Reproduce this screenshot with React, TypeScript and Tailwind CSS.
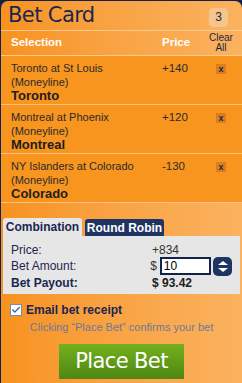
import { Check } from 'lucide-react'

interface Bet {
  event: string
  market: string
  pick: string
  price: string
}

const bets: Bet[] = [
  { event: 'Toronto at St Louis', market: '(Moneyline)', pick: 'Toronto', price: '+140' },
  { event: 'Montreal at Phoenix', market: '(Moneyline)', pick: 'Montreal', price: '+120' },
  { event: 'NY Islanders at Colorado', market: '(Moneyline)', pick: 'Colorado', price: '-130' },
]

export default function App() {
  return (
    <div className="w-[242px] h-[383px] bg-[#13224d] pl-px pt-px overflow-hidden font-['Liberation_Sans',Arial,sans-serif]">
      <div className="h-[382px] w-[241px] rounded-t-[7px] bg-gradient-to-r from-[#f7921e] via-[#f9a445] to-[#fbb25e] flex flex-col">
        {/* header */}
        <div className="flex items-center justify-between h-[30px] pl-[7px] pr-[13px] border-b border-[#fcc88e]">
          <span className="text-[21px] leading-none text-[#1b2650] font-['DejaVu_Sans',sans-serif] tracking-[-0.6px]">Bet Card</span>
          <span className="w-[21px] h-[21px] rounded-[5px] bg-[#f6c58a] border border-[#f3b06a] flex items-center justify-center text-[12px] text-[#1b2650] mt-[3px]">3</span>
        </div>
        <div className="flex items-center h-[25px] border-b border-[#fcc88e] pl-[10px] pr-[8px] text-[11.5px] font-bold text-white">
          <span className="flex-1">Selection</span>
          <span className="w-[46px]">Price</span>
          <span className="w-[26px] text-center text-[10px] leading-[10px] font-normal text-[#1b2650]">Clear<br />All</span>
        </div>
        {/* selections */}
        <div className="bg-[#f8951f]">
          {bets.map((b) => (
            <div key={b.event} className="flex h-[49px] border-b border-[#fbc083] pl-[10px] pr-[8px] pt-[6px] text-[11px] leading-[13.5px] text-[#2a2a2a]">
              <div className="flex-1">
                <div>{b.event}</div>
                <div>{b.market}</div>
                <div className="text-[13px] font-bold text-[#1d1d1d]">{b.pick}</div>
              </div>
              <div className="w-[46px] text-[11.5px]">{b.price}</div>
              <div className="w-[26px] flex justify-center pt-[2px]">
                <span className="w-[10px] h-[10px] bg-[#d77f1f] text-[9px] leading-[10px] text-center font-bold text-[#1b2650]">x</span>
              </div>
            </div>
          ))}
        </div>
        {/* tabs */}
        <div className="flex items-end gap-[3px] pl-[2px] mt-[15px] h-[18px]">
          <div className="h-[18px] w-[79px] bg-[#e6e6e6] rounded-t-[3px] flex items-center justify-center text-[12px] font-bold text-[#1b2650]">Combination</div>
          <div className="h-[17px] w-[79px] bg-[#1f3462] rounded-t-[3px] flex items-center justify-center text-[12px] font-bold text-white">Round Robin</div>
        </div>
        <div className="mx-[2px] bg-[#e6e6e6] px-[8px] pt-[6px] pb-[3px] text-[12px] text-[#1b2650]">
          <div className="flex h-[15px] items-center">
            <span className="w-[141px]">Price:</span>
            <span className="text-[#333]">+834</span>
          </div>
          <div className="flex h-[18px] items-center">
            <span className="w-[141px]">Bet Amount:</span>
            <span className="text-[#333] mr-[3px]">$</span>
            <div className="w-[52px] h-[18px] border-2 border-[#13224d] bg-white text-[12px] leading-[14px] px-[2px] text-black">10</div>
            <div className="ml-[2px] w-[19px] h-[19px] rounded-[5px] bg-[#1f3462] flex flex-col items-center justify-center gap-[3px]">
              <span className="w-0 h-0 border-x-[5px] border-x-transparent border-b-[4px] border-b-white" />
              <span className="w-0 h-0 border-x-[5px] border-x-transparent border-t-[4px] border-t-white" />
            </div>
          </div>
          <div className="flex h-[16px] items-center font-bold text-[#1d1d1d]">
            <span className="w-[141px] text-[#1b2650]">Bet Payout:</span>
            <span>$ 93.42</span>
          </div>
        </div>
        {/* email */}
        <div className="flex items-center gap-[4px] pl-[9px] mt-[6px] h-[20px]">
          <span className="w-[12px] h-[12px] border border-[#7b8aa8] bg-white flex items-center justify-center">
            <Check className="w-[10px] h-[10px] text-[#3a5a9a]" strokeWidth={3} />
          </span>
          <span className="text-[12px] font-bold text-[#1b2650]">Email bet receipt</span>
        </div>
        <div className="h-[14px] leading-[14px] text-center text-[11px] text-[#6b7a9a]">Clicking “Place Bet” confirms your bet</div>
        <div className="flex justify-center mt-[10px]">
          <button className="w-[125px] h-[35px] bg-gradient-to-b from-[#74b11e] to-[#4e8713] text-white text-[21px] font-['DejaVu_Sans',sans-serif] tracking-[-0.6px] flex items-center justify-center">Place Bet</button>
        </div>
      </div>
    </div>
  )
}
